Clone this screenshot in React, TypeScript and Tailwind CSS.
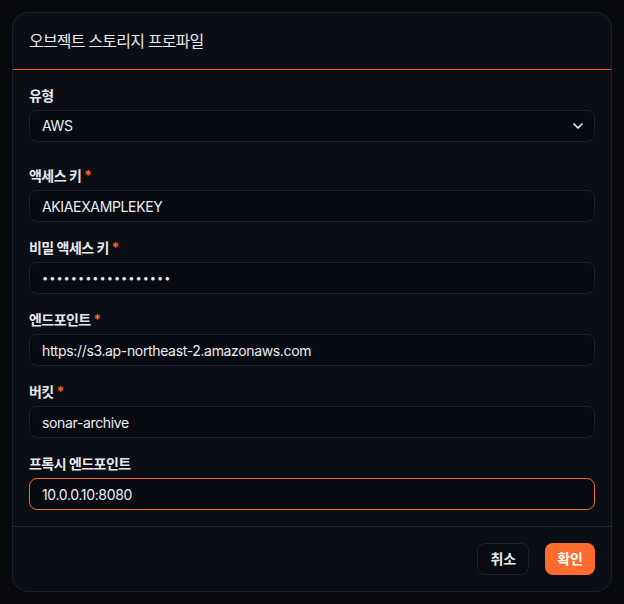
import { ChevronDown } from "lucide-react";

const font = { fontFamily: 'Inter, "Noto Sans CJK KR", sans-serif' };

const Field = ({
  label,
  required,
  value,
  password,
  focused,
}: {
  label: string;
  required?: boolean;
  value: string;
  password?: boolean;
  focused?: boolean;
}) => (
  <div>
    <label className="mb-1 flex h-5 items-center text-sm font-semibold text-[#e6e8ee] tracking-[-0.04em]">
      {label}
      {required && <span className="ml-[3px] text-[#ff6a2a]">*</span>}
    </label>
    <input
      readOnly
      type={password ? "password" : "text"}
      value={value}
      className={
        password
          ? "h-8 w-full rounded-lg border border-[#1a2030] bg-[#070a10] px-3 text-[11px] tracking-[1px] text-[#e6e8ee] outline-none"
          : focused
            ? "h-8 w-full rounded-lg border border-[#f26a2e] bg-[#070a10] px-3 text-sm tracking-[-0.025em] text-[#eceef2] outline-none"
            : "h-8 w-full rounded-lg border border-[#1a2030] bg-[#070a10] px-3 text-sm tracking-[-0.025em] text-[#eceef2] outline-none"
      }
    />
  </div>
);

export default function App() {
  return (
    <div className="min-h-screen bg-[#07090d] p-3" style={font}>
      <div className="w-[600px] rounded-2xl border border-[#1c2130] bg-[#0b0e15]">
        {/* Header */}
        <div className="border-b border-[#ff5a1f] px-4 py-4">
          <h2 className="text-base leading-6 text-[#e6e8ee] tracking-[-0.05em]">
            오브젝트 스토리지 프로파일
          </h2>
        </div>

        {/* Body */}
        <div className="space-y-4 border-b border-[#1e2740] px-4 pt-4 pb-4">
          <div className="pb-2">
            <label className="mb-1 flex h-5 items-center text-sm font-semibold text-[#e6e8ee] tracking-[-0.04em]">
              유형
            </label>
            <div className="flex h-8 w-full items-center justify-between rounded-lg border border-[#1a2030] bg-[#070a10] pl-3 pr-2 text-sm tracking-[-0.025em] text-[#eceef2]">
              <span>AWS</span>
              <ChevronDown size={16} strokeWidth={2.5} />
            </div>
          </div>
          <Field label="액세스 키" required value="AKIAEXAMPLEKEY" />
          <Field label="비밀 액세스 키" required password value="abcdefghijklmnopqr" />
          <Field label="엔드포인트" required value="https://s3.ap-northeast-2.amazonaws.com" />
          <Field label="버킷" required value="sonar-archive" />
          <Field label="프록시 엔드포인트" focused value="10.0.0.10:8080" />
        </div>

        {/* Footer */}
        <div className="flex justify-end gap-4 px-4 py-4">
          <button className="h-8 rounded-lg border border-[#1c2233] bg-[#080b11] px-3 text-sm font-semibold text-[#e6e8ee]">
            취소
          </button>
          <button className="h-8 rounded-lg bg-[#ff6b2c] px-3 text-sm font-semibold text-white">
            확인
          </button>
        </div>
      </div>
    </div>
  );
}
